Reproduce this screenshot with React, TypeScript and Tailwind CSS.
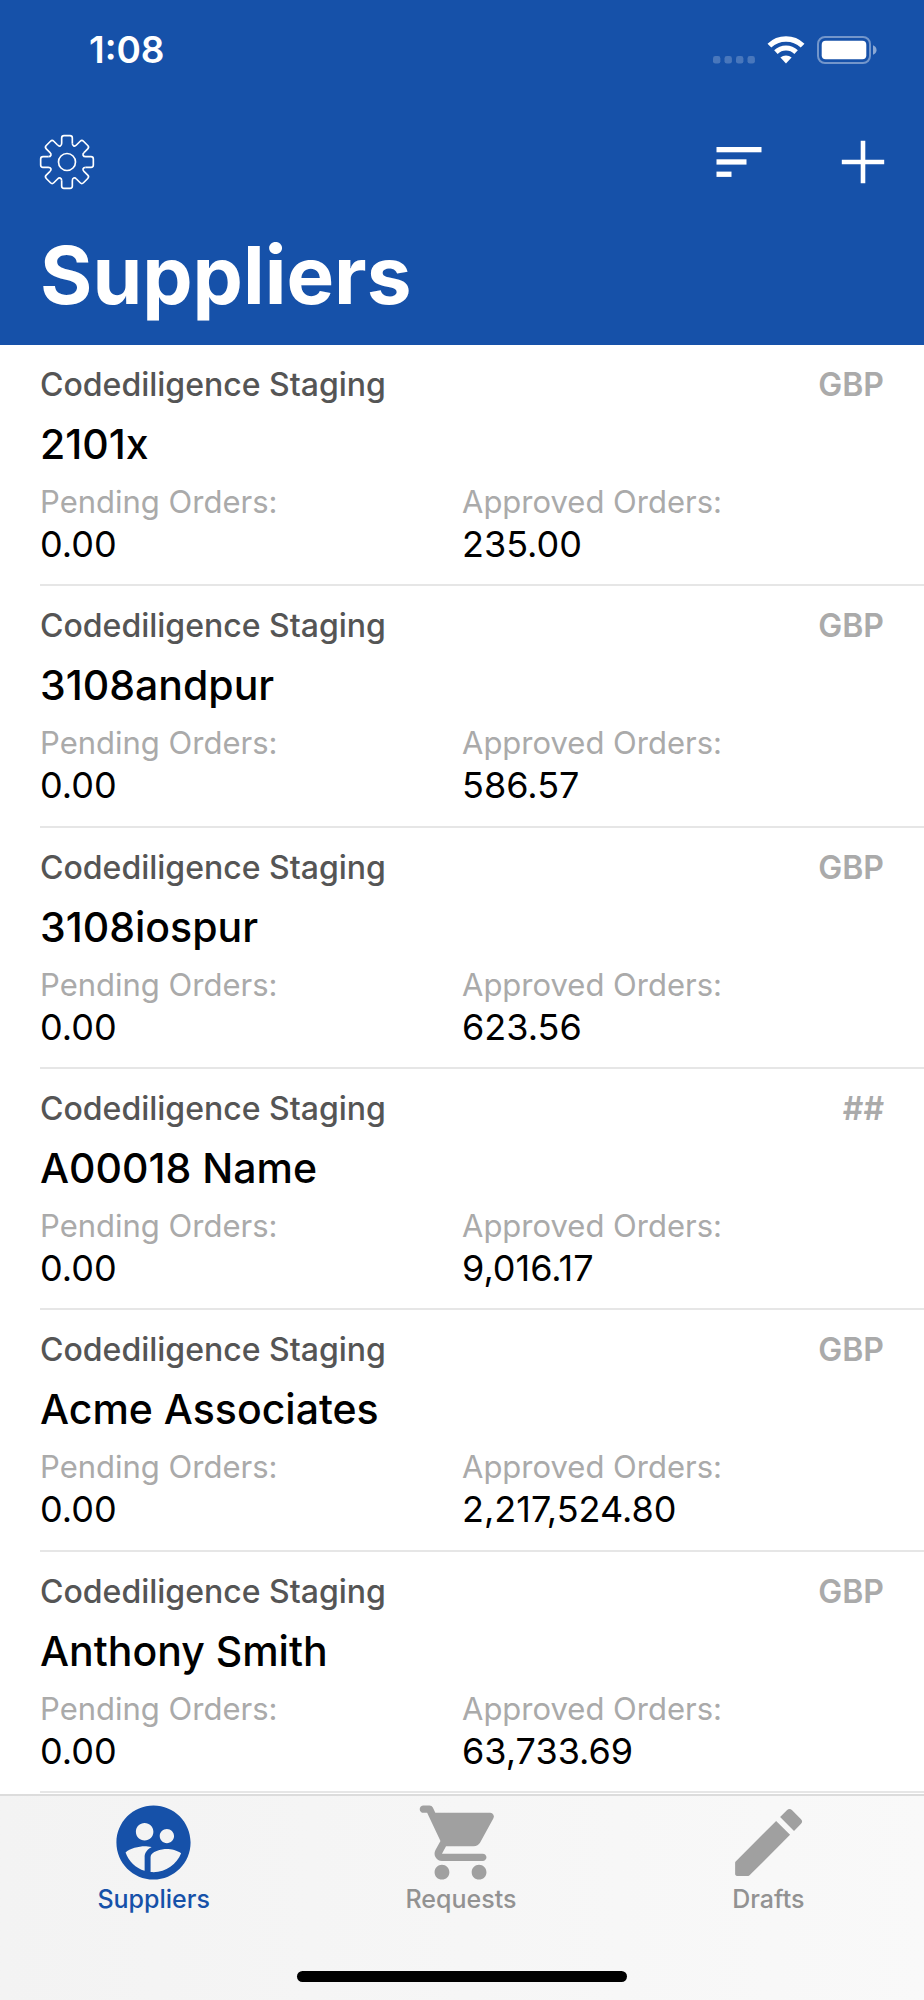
import React from "react";

type Supplier = {
  name: string;
  currency: string;
  pending: string;
  approved: string;
};

const ORGANISATION = "Codediligence Staging";

const suppliers: Supplier[] = [
  { name: "2101x", currency: "GBP", pending: "0.00", approved: "235.00" },
  { name: "3108andpur", currency: "GBP", pending: "0.00", approved: "586.57" },
  { name: "3108iospur", currency: "GBP", pending: "0.00", approved: "623.56" },
  { name: "A00018 Name", currency: "##", pending: "0.00", approved: "9,016.17" },
  { name: "Acme Associates", currency: "GBP", pending: "0.00", approved: "2,217,524.80" },
  { name: "Anthony Smith", currency: "GBP", pending: "0.00", approved: "63,733.69" },
];

function SignalDots() {
  return (
    <svg width="42" height="28" viewBox="0 0 42 28" fill="#fff" fillOpacity="0.22" aria-hidden="true">
      {[0, 11.5, 23, 34.5].map((x) => (
        <rect key={x} x={x} y="20" width="7.4" height="7.6" rx="2.4" />
      ))}
    </svg>
  );
}

function WifiIcon() {
  return (
    <svg width="38" height="28" viewBox="0 0 38 28" fill="none" stroke="#fff" aria-hidden="true">
      <path d="M2.4 9.6A24 24 0 0 1 35.6 9.6" strokeWidth="5.4" />
      <path d="M8.9 16.1A14.6 14.6 0 0 1 29.1 16.1" strokeWidth="5" />
      <path d="M19 27.4L13.4 21.6A8.2 8.2 0 0 1 24.6 21.6Z" fill="#fff" stroke="none" />
    </svg>
  );
}

function BatteryIcon() {
  return (
    <svg width="60" height="28" viewBox="0 0 60 28" fill="#fff" aria-hidden="true">
      <rect x="1" y="1" width="52" height="26" rx="7" fill="none" stroke="#fff" strokeOpacity="0.4" strokeWidth="2" />
      <rect x="4.7" y="4.7" width="44.6" height="18.6" rx="4" />
      <path d="M56 9.3C58 10 59.6 11.8 59.6 14S58 18 56 18.7Z" fillOpacity="0.5" />
    </svg>
  );
}

function GearIcon() {
  return (
    <svg width="56" height="56" viewBox="-84 -84 168 168" fill="none" stroke="#fff" strokeWidth="5" aria-hidden="true">
      {[0, 45, 90, 135, 180, 225, 270, 315].map((angle) => (
        <path
          key={angle}
          transform={`rotate(${angle})`}
          d="M16 -56V-72Q16 -79 9 -79H-9Q-16 -79 -16 -72V-56C-16 -48 -22.6 -45.2 -28.3 -50.9"
        />
      ))}
      <circle r="25.5" />
    </svg>
  );
}

function SortIcon() {
  return (
    <svg width="46" height="30" viewBox="0 0 46 30" fill="#fff" aria-hidden="true">
      <rect x="0.5" y="0" width="45" height="5.3" />
      <rect x="0.5" y="12.3" width="30" height="5.3" />
      <rect x="0.5" y="24.6" width="15" height="5.3" />
    </svg>
  );
}

function PlusIcon() {
  return (
    <svg width="44" height="44" viewBox="0 0 44 44" stroke="#fff" strokeWidth="4.6" aria-hidden="true">
      <path d="M22 0.8V43.2M0.8 22H43.2" />
    </svg>
  );
}

const tabs = [
  {
    label: "Suppliers",
    active: true,
    path: "M12 2C6.48 2 2 6.48 2 12s4.48 10 10 10 10-4.48 10-10S17.52 2 12 2zm3.61 6.34c1.07 0 1.93.86 1.93 1.93 0 1.07-.86 1.93-1.93 1.93-1.07 0-1.93-.86-1.93-1.93-.01-1.07.86-1.93 1.93-1.93zm-6-1.58c1.3 0 2.36 1.06 2.36 2.36 0 1.3-1.06 2.36-2.36 2.36s-2.36-1.06-2.36-2.36c0-1.31 1.05-2.36 2.36-2.36zm0 9.13v3.75c-2.4-.75-4.3-2.6-5.14-4.96 1.05-1.12 3.67-1.69 5.14-1.69.53 0 1.2.08 1.9.22-1.64.87-1.9 2.02-1.9 2.68zM12 20c-.27 0-.53-.01-.79-.04v-4.07c0-1.42 2.94-2.13 4.4-2.13 1.07 0 2.92.39 3.84 1.15C18.28 17.88 15.39 20 12 20z",
  },
  {
    label: "Requests",
    active: false,
    path: "M7 18c-1.1 0-1.99.9-1.99 2S5.9 22 7 22s2-.9 2-2-.9-2-2-2zM1 3c0 .55.45 1 1 1h1l3.6 7.59-1.35 2.44C4.52 15.37 5.48 17 7 17h11c.55 0 1-.45 1-1s-.45-1-1-1H7l1.1-2h7.45c.75 0 1.41-.41 1.75-1.03l3.58-6.49A.996.996 0 0 0 20.01 4H5.21l-.67-1.43a.993.993 0 0 0-.9-.57H2c-.55 0-1 .45-1 1zm16 15c-1.1 0-1.99.9-1.99 2s.89 2 1.99 2 2-.9 2-2-.9-2-2-2z",
  },
  {
    label: "Drafts",
    active: false,
    path: "M3 17.46v3.04c0 .28.22.5.5.5h3.04c.13 0 .26-.05.35-.15L17.81 9.94l-3.75-3.75L3.15 17.1c-.1.1-.15.22-.15.36zM20.71 7.04a.996.996 0 0 0 0-1.41l-2.34-2.34a.996.996 0 0 0-1.41 0l-1.83 1.83 3.75 3.75 1.83-1.83z",
  },
];

function SupplierRow({ supplier }: { supplier: Supplier }) {
  return (
    <li className="ml-10 border-b-2 border-[#e6e6e6] pt-5 pr-10 pb-4">
      <div className="flex items-center justify-between text-[32px] leading-10 font-medium">
        <span className="text-[#555555]">{ORGANISATION}</span>
        <span className="font-semibold text-[#aaaaaa]">{supplier.currency}</span>
      </div>
      <h2 className="mt-[15px] text-[41px] leading-12 font-medium">{supplier.name}</h2>
      <dl className="mt-[14px] grid grid-cols-2">
        <div>
          <dt className="text-[31px] leading-10 text-[#aaaaaa]">Pending Orders:</dt>
          <dd className="text-4xl leading-11">{supplier.pending}</dd>
        </div>
        <div>
          <dt className="text-[31px] leading-10 text-[#aaaaaa]">Approved Orders:</dt>
          <dd className="text-4xl leading-11">{supplier.approved}</dd>
        </div>
      </dl>
    </li>
  );
}

export default function App() {
  return (
    <div className="flex min-h-screen flex-col bg-white font-['Inter',sans-serif] text-black">
      <header className="bg-[#1651a9] text-white">
        <div className="flex h-[99px] items-center justify-between pr-[47px] pl-[89px]">
          <time className="text-[37px] font-semibold">1:08</time>
          <div className="flex items-center gap-3">
            <SignalDots />
            <WifiIcon />
            <BatteryIcon />
          </div>
        </div>
        <div className="flex h-[126px] items-center justify-between px-[39px]">
          <button type="button" aria-label="Settings">
            <GearIcon />
          </button>
          <div className="flex items-center gap-[79px]">
            <button type="button" aria-label="Sort">
              <SortIcon />
            </button>
            <button type="button" aria-label="Add supplier">
              <PlusIcon />
            </button>
          </div>
        </div>
        <h1 className="px-10 pb-5 text-[80px] leading-[100px] font-bold">Suppliers</h1>
      </header>

      <main className="flex grow flex-col pb-px">
        <ul className="grid grow auto-rows-fr">
          {suppliers.map((supplier) => (
            <SupplierRow key={supplier.name} supplier={supplier} />
          ))}
        </ul>
      </main>

      <nav className="sticky bottom-0 border-t-2 border-[#dcdcdc] bg-linear-to-r from-[#f3f3f3] to-[#f9f9f9] pt-0.5">
        <div className="grid grid-cols-3 pr-0.5">
          {tabs.map((tab) => (
            <a
              key={tab.label}
              href={`#${tab.label.toLowerCase()}`}
              aria-current={tab.active ? "page" : undefined}
              className={
                tab.active
                  ? "flex flex-col items-center text-[#1651a9]"
                  : "flex flex-col items-center text-[#a0a0a0]"
              }
            >
              <svg width="89" height="89" viewBox="0 0 24 24" fill="currentColor" aria-hidden="true">
                <path d={tab.path} />
              </svg>
              <span
                className={
                  tab.active
                    ? "text-[25px] leading-6 font-medium"
                    : "text-[25px] leading-6 font-medium text-[#929292]"
                }
              >
                {tab.label}
              </span>
            </a>
          ))}
        </div>
        <div className="flex justify-center pt-[60px] pb-[18px]">
          <div className="h-[11px] w-[330px] rounded-full bg-black" />
        </div>
      </nav>
    </div>
  );
}
